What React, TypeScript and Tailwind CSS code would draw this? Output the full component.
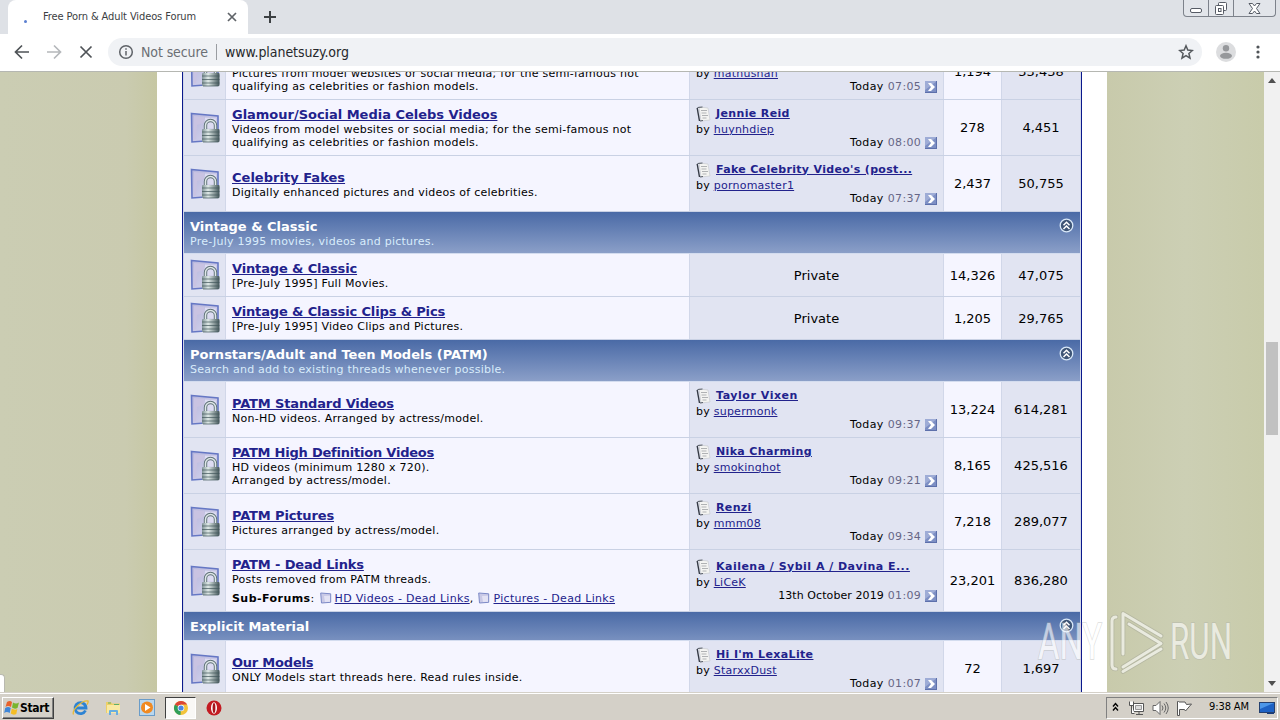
import type { ReactNode } from "react";

interface LastPost {
  title: string;
  author: string;
  day: string;
  time: string;
  titleClass?: string;
}

interface Forum {
  name: string;
  nameClass?: string;
  description: string[];
  subForums?: string[];
  lastPost?: LastPost;
  threads: string;
  posts: string;
}

interface Category {
  name?: string;
  description?: string;
  forums: Forum[];
}

const categories: Category[] = [
  {
    forums: [
      {
        name: "Glamour/Social Media Celebs",
        description: [
          "Pictures from model websites or social media; for the semi-famous not",
          "qualifying as celebrities or fashion models.",
        ],
        lastPost: { title: "Glamour", author: "mathushan", day: "Today", time: "07:05" },
        threads: "1,194",
        posts: "33,438",
      },
      {
        name: "Glamour/Social Media Celebs Videos",
        nameClass: "tracking-[-0.02px]",
        description: [
          "Videos from model websites or social media; for the semi-famous not",
          "qualifying as celebrities or fashion models.",
        ],
        lastPost: { title: "Jennie Reid", author: "huynhdiep", day: "Today", time: "08:00" },
        threads: "278",
        posts: "4,451",
      },
      {
        name: "Celebrity Fakes",
        nameClass: "tracking-[0.02px]",
        description: ["Digitally enhanced pictures and videos of celebrities."],
        lastPost: {
          title: "Fake Celebrity Video's (post...",
          titleClass: "tracking-[0.32px]",
          author: "pornomaster1",
          day: "Today",
          time: "07:37",
        },
        threads: "2,437",
        posts: "50,755",
      },
    ],
  },
  {
    name: "Vintage & Classic",
    description: "Pre-July 1995 movies, videos and pictures.",
    forums: [
      {
        name: "Vintage & Classic",
        description: ["[Pre-July 1995] Full Movies."],
        threads: "14,326",
        posts: "47,075",
      },
      {
        name: "Vintage & Classic Clips & Pics",
        description: ["[Pre-July 1995] Video Clips and Pictures."],
        threads: "1,205",
        posts: "29,765",
      },
    ],
  },
  {
    name: "Pornstars/Adult and Teen Models (PATM)",
    description: "Search and add to existing threads whenever possible.",
    forums: [
      {
        name: "PATM Standard Videos",
        description: ["Non-HD videos. Arranged by actress/model."],
        lastPost: {
          title: "Taylor Vixen",
          titleClass: "tracking-[0.55px]",
          author: "supermonk",
          day: "Today",
          time: "09:37",
        },
        threads: "13,224",
        posts: "614,281",
      },
      {
        name: "PATM High Definition Videos",
        nameClass: "tracking-[-0.22px]",
        description: ["HD videos (minimum 1280 x 720).", "Arranged by actress/model."],
        lastPost: { title: "Nika Charming", author: "smokinghot", day: "Today", time: "09:21" },
        threads: "8,165",
        posts: "425,516",
      },
      {
        name: "PATM Pictures",
        description: ["Pictures arranged by actress/model."],
        lastPost: { title: "Renzi", author: "mmm08", day: "Today", time: "09:34" },
        threads: "7,218",
        posts: "289,077",
      },
      {
        name: "PATM - Dead Links",
        description: ["Posts removed from PATM threads."],
        subForums: ["HD Videos - Dead Links", "Pictures - Dead Links"],
        lastPost: {
          title: "Kailena / Sybil A / Davina E...",
          titleClass: "tracking-[0.48px]",
          author: "LiCeK",
          day: "13th October 2019",
          time: "01:09",
        },
        threads: "23,201",
        posts: "836,280",
      },
    ],
  },
  {
    name: "Explicit Material",
    forums: [
      {
        name: "Our Models",
        nameClass: "tracking-[-0.22px]",
        description: ["ONLY Models start threads here. Read rules inside."],
        lastPost: { title: "Hi I'm LexaLite", author: "StarxxDust", day: "Today", time: "01:07" },
        threads: "72",
        posts: "1,697",
      },
    ],
  },
];

function LockedForumIcon() {
  return (
    <svg width="30" height="32" viewBox="0 0 30 32">
      <defs>
        <linearGradient id="lock" x1="0" x2="1">
          <stop offset="0" stopColor="#7f9296" />
          <stop offset="0.35" stopColor="#dfe9e7" />
          <stop offset="1" stopColor="#425559" />
        </linearGradient>
        <linearGradient id="page" x1="0" x2="1" y2="1">
          <stop offset="0" stopColor="#b5b5dc" />
          <stop offset="1" stopColor="#d9d8ef" />
        </linearGradient>
      </defs>
      <path d="M1.500 1.500 28 4v24L2 30z" fill="url(#page)" stroke="#6577c4" strokeWidth="1.600" />
      <path d="M4 4l10 1v6l-7 2-1 14-2 .5z" fill="#c9c3e2" />
      <path d="M15 5.500l11 1v10H14z" fill="#dddcf2" />
      <path d="M15.500 18v-4.500a5 5 0 0 1 10 0V18" fill="none" stroke="#5f7277" strokeWidth="3.400" />
      <path d="M15.500 18v-4.500a5 5 0 0 1 10 0V18" fill="none" stroke="#dfe7e8" strokeWidth="1.500" />
      <rect x="12" y="17" width="17.500" height="13" rx="1" fill="url(#lock)" />
      <path d="M12 20h17.500M12 23.500h17.500M12 27h17.500M13 30h15.500" stroke="#40565a" strokeWidth="0.700" />
    </svg>
  );
}

function PostIcon() {
  return (
    <svg width="16" height="16" viewBox="0 0 16 16">
      <path d="M3 1l9 1 2 12-9 1z" fill="#f4f4f2" stroke="#c9cbd0" strokeWidth="0.700" />
      <path d="M1.200 2l2.300 13" stroke="#333842" strokeWidth="1.400" />
      <path d="M1.500 1.500l5-.5M4 15l3-.5" stroke="#555b66" />
      <path d="M5 4.500h6M5.500 7h5M6 9.500h6M6.500 12h4" stroke="#b0b2b4" />
    </svg>
  );
}

function GoIcon() {
  return (
    <svg width="12" height="12" viewBox="0 0 12 12">
      <rect width="12" height="12" fill="#7d8fc4" />
      <path d="M0 0h12L0 9z" fill="#9eacd6" />
      <path d="M0 11.500h12M11.500 0v12" stroke="#5d70ab" />
      <path d="M3 2h3l4 4-4 4H3l3-4z" fill="#fff" />
    </svg>
  );
}

function SubForumIcon() {
  return (
    <svg width="12" height="12" viewBox="0 0 12 12">
      <path d="M.7 1l10 .8v8.500l-9.200.7z" fill="#c9c9e6" stroke="#7c89c6" />
      <path d="M4 4l6-.3v6l-5 .3z" fill="#e3e2f4" />
    </svg>
  );
}

function CollapseIcon() {
  return (
    <svg width="15" height="15" viewBox="0 0 15 15">
      <circle cx="7.500" cy="7.500" r="6.300" fill="#3e5576" stroke="#d9e8f8" strokeWidth="1.300" />
      <path d="M4.500 7.200l3-3 3 3M4.500 11l3-3 3 3" fill="none" stroke="#fff" strokeWidth="1.500" />
    </svg>
  );
}

function Link({ children, className = "" }: { children: ReactNode; className?: string }) {
  return (
    <a className={`text-[#22228c] underline decoration-1 underline-offset-1 ${className}`}>{children}</a>
  );
}

function ForumRow({ forum }: { forum: Forum }) {
  const height = forum.subForums ? "h-[62px]" : forum.lastPost ? "h-14" : "h-[43px]";
  const singleLine = forum.lastPost && !forum.subForums && forum.description.length === 1;
  return (
    <div
      className={`grid shrink-0 grid-cols-[42px_464px_254px_58px_78px] border-b border-[#c9d1e4] whitespace-nowrap ${height}`}
    >
      <div className="flex items-center justify-center border-r border-[#d1d7e9] bg-[#e1e4f2]">
        <LockedForumIcon />
      </div>
      <div
        className={`flex flex-col justify-center border-r border-[#d1d7e9] bg-[#f5f5ff] pl-1.5 ${
          singleLine ? "pt-0.5" : ""
        }`}
      >
        <div className="h-4 text-[13px] leading-4 font-bold">
          <Link className={forum.nameClass ?? "tracking-[-0.14px]"}>{forum.name}</Link>
        </div>
        {forum.description.map((line) => (
          <div key={line} className="h-[13px] text-[11px] leading-[13px] tracking-[0.25px]">
            {line}
          </div>
        ))}
        {forum.subForums && (
          <div className="mt-1.5 flex h-[13px] items-center text-[11px] leading-[13px] tracking-[0.3px]">
            <b className="tracking-[0.45px]">Sub-Forums</b>:
            {forum.subForums.map((sub, i) => (
              <span key={sub} className="flex items-center">
                <span className="mr-[3px] ml-[5px]">
                  <SubForumIcon />
                </span>
                <Link>{sub}</Link>
                {i === 0 && ","}
              </span>
            ))}
          </div>
        )}
      </div>
      <div className="flex flex-col justify-center border-r border-[#d1d7e9] bg-[#e1e4f2] px-1.5 text-[11px] tracking-[0.24px]">
        {forum.lastPost ? (
          <>
            <div className="flex h-4 items-center">
              <PostIcon />
              <Link
                className={`ml-1 leading-4 font-bold ${forum.lastPost.titleClass ?? "tracking-[0.36px]"}`}
              >
                {forum.lastPost.title}
              </Link>
            </div>
            <div className="h-[14px] leading-[15px]">
              by <Link>{forum.lastPost.author}</Link>
            </div>
            <div className="flex h-[14px] items-start justify-end leading-[13px]">
              <span className={forum.subForums ? "tracking-[0.08px]" : "tracking-[0.4px]"}>
                {forum.lastPost.day}
              </span>
              <span className="ml-1 tracking-[0.3px] text-[#666686]">{forum.lastPost.time}</span>
              <span className="mt-px ml-1">
                <GoIcon />
              </span>
            </div>
          </>
        ) : (
          <div className="pt-px text-center text-[13px] tracking-normal">Private</div>
        )}
      </div>
      <div className="flex items-center justify-center border-r border-[#d1d7e9] bg-[#f5f5ff] pt-px text-[13px]">
        {forum.threads}
      </div>
      <div className="flex items-center justify-center bg-[#e1e4f2] pt-px text-[13px]">{forum.posts}</div>
    </div>
  );
}

function CategoryHeader({ name, description }: { name: string; description?: string }) {
  return (
    <div
      className={`flex shrink-0 justify-between border-b border-[#d3dcef] bg-linear-to-b from-[#4a6aa6] px-1.5 pt-1.5 text-white ${
        description ? "h-[42px] to-[#8b9fc8]" : "h-[29px] to-[#7890bf]"
      }`}
    >
      <div className="pt-px whitespace-nowrap">
        <div className="h-4 text-[13px] leading-4 font-bold">{name}</div>
        {description && (
          <div className="h-[13px] text-[11px] leading-[13px] tracking-[0.24px] text-[#d8ecfb]">
            {description}
          </div>
        )}
      </div>
      <CollapseIcon />
    </div>
  );
}

function BrowserChrome() {
  return (
    <header className="h-[72px] font-['DejaVu_Sans_Condensed','DejaVu_Sans',sans-serif]">
      <div className="flex h-[34px] justify-between bg-[#dee1e6]">
        <div className="flex">
          <div className="ml-2 flex w-60 items-center rounded-t-lg bg-white pr-2.5 pl-4 text-[11px] text-[#3c4043]">
            <span className="mt-2 h-[3px] w-[3px] rounded-full bg-[#5b7fd0]" />
            <span className="ml-4 grow pt-px tracking-[-0.1px] whitespace-nowrap">
              Free Porn &amp; Adult Videos Forum
            </span>
            <svg width="12" height="12" viewBox="0 0 12 12" stroke="#5f6368" strokeWidth="1.700">
              <path d="M2 2l8 8M10 2l-8 8" />
            </svg>
          </div>
          <svg className="mt-2.5 ml-[15px]" width="14" height="14" viewBox="0 0 14 14" stroke="#3c4043" strokeWidth="2">
            <path d="M7 1v12M1 7h12" />
          </svg>
        </div>
        <div className="mr-1 flex h-[17px] w-[93px] rounded-b-sm border border-t-0 border-[#7d828b] bg-[#e2e5ea]">
          <div className="flex w-[25px] items-end justify-center border-r border-[#7d828b] pb-[3px]">
            <div className="h-[5px] w-3 rounded-[2px] border border-[#565b65] bg-white" />
          </div>
          <div className="flex w-[25px] items-center justify-center border-r border-[#7d828b]">
            <svg width="14" height="13" viewBox="0 0 14 13" fill="#fff" stroke="#565b65">
              <rect x="4.500" y=".5" width="8" height="8" rx="1" />
              <rect x="1.500" y="3.500" width="8" height="9" rx="1" />
              <rect x="4.500" y="6.500" width="2.500" height="3" />
            </svg>
          </div>
          <div className="flex grow items-center justify-center">
            <svg width="13" height="11" viewBox="0 0 13 11" fill="#fff" stroke="#565b65">
              <path d="M1 .5h3.500l2 2.500 2-2.500H12L8.500 5.500 12 10.500H8.500L6.500 8l-2 2.500H1l3.500-5z" />
            </svg>
          </div>
        </div>
      </div>
      <div className="flex h-[38px] items-center border-b border-[#b5b7b2] bg-white pr-3.5 pb-px pl-3.5">
        <svg width="80" height="16" viewBox="0 0 80 16" fill="none" strokeWidth="1.700">
          <path d="M15 8H2M8 1.500L1.500 8 8 14.500" stroke="#4f5357" />
          <path d="M33 8h13M40 1.500L46.500 8 40 14.500" stroke="#b5b8bb" />
          <path d="M66.500 2.500l11 11M77.500 2.500l-11 11" stroke="#4f5357" />
        </svg>
        <div className="ml-3.5 flex h-7 w-[1094px] items-center rounded-full bg-[#f0f2f5] pr-2 pl-2.5 text-[14px]">
          <svg width="16" height="16" viewBox="0 0 16 16" fill="none" stroke="#5f6368" strokeWidth="1.500">
            <circle cx="8" cy="8" r="6.300" />
            <path d="M8 7v4.500M8 4.200v1.600" />
          </svg>
          <span className="ml-[7px] w-[67px] tracking-[-0.1px] whitespace-nowrap text-[#6b6f74]">Not secure</span>
          <span className="mx-2 h-4 w-px bg-[#9a9da1]" />
          <span className="grow tracking-[-0.05px] text-[#26282b]">www.planetsuzy.org</span>
          <svg width="16" height="16" viewBox="0 0 16 16" fill="none" stroke="#55595d" strokeWidth="1.500">
            <path d="M8 1.800l1.800 4.300 4.600.4-3.500 3 1.100 4.600-4-2.500-4 2.500 1.100-4.600-3.500-3 4.600-.4z" />
          </svg>
        </div>
        <svg className="ml-3.5" width="20" height="20" viewBox="0 0 20 20">
          <circle cx="10" cy="10" r="10" fill="#dcdddf" />
          <circle cx="10" cy="6.300" r="3.200" fill="#96989b" />
          <ellipse cx="10" cy="13.800" rx="6" ry="3" fill="#96989b" />
        </svg>
        <svg className="ml-5" width="4" height="16" viewBox="0 0 4 16" fill="#505458">
          <circle cx="2" cy="3" r="1.600" />
          <circle cx="2" cy="8" r="1.600" />
          <circle cx="2" cy="13" r="1.600" />
        </svg>
      </div>
    </header>
  );
}

function Watermark() {
  return (
    <svg
      className="absolute top-[605px] left-[1030px] font-['Roboto',sans-serif]"
      width="210"
      height="72"
      viewBox="0 0 210 72"
      opacity="0.6"
    >
      <g
        fill="#fff"
        stroke="#a9aca8"
        strokeOpacity=".7"
        strokeWidth="1.600"
        paintOrder="stroke"
        fontSize="50"
      >
        <text x="8" y="54" textLength="64" lengthAdjust="spacingAndGlyphs">
          ANY
        </text>
        <text x="140" y="54" textLength="62" lengthAdjust="spacingAndGlyphs">
          RUN
        </text>
      </g>
      <g fill="none" strokeLinecap="round" strokeLinejoin="round">
        <path
          d="M86 12q-4 0-4 4v44q0 4 4 4M93 49V8.500L131 31M99 19l32 19.500L93 62M93 66.500L131 44"
          stroke="#898c88"
          strokeOpacity=".5"
          strokeWidth="4.600"
        />
        <path
          d="M86 12q-4 0-4 4v44q0 4 4 4M93 49V8.500L131 31M99 19l32 19.500L93 62M93 66.500L131 44"
          stroke="#fff"
          strokeWidth="3"
        />
      </g>
    </svg>
  );
}

function Taskbar() {
  return (
    <footer className="flex h-7 items-center justify-between border-t border-[#d4d0c8] bg-[#d4d0c8] font-['DejaVu_Sans_Condensed','DejaVu_Sans',sans-serif] shadow-[inset_0_1px_0_#fff]">
      <div className="flex items-center pt-0.5">
        <div className="ml-0.5 flex h-[22px] w-[52px] items-center border border-t-white border-r-[#404040] border-b-[#404040] border-l-white pl-px text-[11px] font-bold shadow-[inset_-1px_-1px_0_#808080]">
          <svg width="16" height="16" viewBox="0 0 16 16">
            <path d="M3 2q3-2 5 0L7 7q-3-2-5.500 0z" fill="#e8622c" />
            <path d="M9 2.500q3 2 6 0L13.500 8q-3 1.500-5.500-.5z" fill="#79b52f" />
            <path d="M1.200 8q3-2 5.500 0l-1 5q-3-2-5.500 0z" fill="#3f86d8" />
            <path d="M7.800 8.500q3 2 5.500.5l-1 5q-3 1.500-5.500-.5z" fill="#f5bd24" />
          </svg>
          <span className="text-[12px] tracking-[-0.3px]">Start</span>
        </div>
        <svg className="ml-[18px]" width="17" height="17" viewBox="0 0 17 17" fill="none">
          <path d="M13.500 11.500A5.500 5.500 0 1 1 14 9H4" stroke="#2d83d3" strokeWidth="2.800" />
          <path d="M1.500 15.500Q0 12 6 6.500T16 2q.5 1.500-1 3.500" stroke="#e8ba36" strokeWidth="1.300" />
        </svg>
        <svg className="ml-4" width="17" height="17" viewBox="0 0 17 17">
          <path d="M1 3h5l1 1.500h8V14H1z" fill="#edcf67" />
          <path d="M2 6h13v8H2z" fill="#f9e9a2" />
          <path d="M4 16v-4q0-1 1-1h7q1 0 1 1v4h-2v-3H6v3z" fill="#67aee0" />
          <path d="M3 4h3M9 5.500h5" stroke="#5faf68" />
        </svg>
        <svg className="ml-[17px]" width="16" height="17" viewBox="0 0 16 17">
          <rect x=".5" y=".5" width="15" height="16" fill="#b9d7ee" stroke="#6a9cc9" />
          <circle cx="8" cy="8.500" r="6" fill="#f08a22" />
          <path d="M6 5l5.500 3.500L6 12z" fill="#fff" />
        </svg>
        <div className="ml-2.5 flex h-[22px] w-[31px] items-center justify-center border border-t-[#404040] border-r-white border-b-white border-l-[#404040] bg-[#f9f8f6]">
          <svg width="16" height="16" viewBox="0 0 16 16">
            <circle cx="8" cy="8" r="7" fill="#f2c33b" />
            <path d="M8 8L1.900 4.500A7 7 0 0 0 7.500 15z" fill="#2f9e58" />
            <path d="M1.900 4.500A7 7 0 0 1 14.100 4.500H8V8z" fill="#db4537" />
            <circle cx="8" cy="8" r="3.300" fill="#fff" />
            <circle cx="8" cy="8" r="2.600" fill="#4a86e4" />
          </svg>
        </div>
        <svg className="ml-2.5" width="16" height="16" viewBox="0 0 16 16">
          <circle cx="8" cy="8" r="7.500" fill="#c31b22" />
          <ellipse cx="8" cy="8" rx="3" ry="5.800" fill="#fff" />
          <ellipse cx="8" cy="8" rx="1.400" ry="5" fill="#a6141b" />
        </svg>
      </div>
      <div className="mt-0.5 mr-0.5 flex h-[22px] w-[172px] items-center border border-t-[#808080] border-r-white border-b-white border-l-[#808080] text-[11px]">
        <svg className="ml-[5px]" width="8" height="12" viewBox="0 0 8 12" fill="none" stroke="#000" strokeWidth="1.400">
          <path d="M1 4.500l2.500-3 2.500 3M1 8.500l2.500-3 2.500 3" />
        </svg>
        <svg className="ml-2" width="17" height="16" viewBox="0 0 17 16" fill="#fff" stroke="#555">
          <path d="M5.500 3.500h10v8h-10zM8 14.500h7M11 12v2" />
          <path d="M1.500 1.500v4h4v-4M3.500 5.500v8h3" />
          <path d="M7.500 5.500h6v4h-6z" fill="#ddd" stroke="#999" />
        </svg>
        <svg className="ml-[7px]" width="17" height="16" viewBox="0 0 17 16" fill="#fff" stroke="#666">
          <path d="M1 5.500h3L8 1.500v13L4 10.500H1z" />
          <path d="M10 5.500q2 2.500 0 5M12 3.500q3.500 4.500 0 9M14 2q4.500 6 0 12" fill="none" />
        </svg>
        <svg className="ml-[7px]" width="17" height="16" viewBox="0 0 17 16" fill="#fff" stroke="#555">
          <path d="M2.500 1.500h-1v14h2v-6h5l1 1.500 6-7-5 .5-1.500-2.500H3z" />
        </svg>
        <span className="ml-4 tracking-[-0.1px] whitespace-nowrap">9:38 AM</span>
        <svg className="ml-2.5" width="17" height="14" viewBox="0 0 17 14">
          <rect x=".5" y="1.500" width="15" height="10" fill="#1e62c4" stroke="#25406f" />
          <path d="M1 2h14L1 8z" fill="#4d97e8" />
          <path d="M8 12.500h7" stroke="#173a78" />
        </svg>
      </div>
    </footer>
  );
}

export default function App() {
  return (
    <div className="relative flex h-[720px] w-[1280px] flex-col overflow-hidden bg-white font-['DejaVu_Sans',Verdana,sans-serif] text-black">
      <BrowserChrome />
      <div className="flex h-[620px]">
        <div className="flex w-[157px] items-end bg-linear-to-r from-[#cbcdb3] via-[#cacbb0] via-80% to-[#c6c7a3]">
          <div className="h-[18px] w-[5px] rounded-tr-sm border-t border-r border-[#b9b9b0] bg-white" />
        </div>
        <main className="flex h-[620px] w-[950px] justify-center overflow-hidden bg-white">
          <div className="w-[900px] border-x border-[#0b198c] bg-[#d1d7e9] px-px">
            <div className="-mt-7 flex flex-col">
              {categories.map((category, i) => (
                <section key={i} className="flex flex-col">
                  {category.name && (
                    <CategoryHeader name={category.name} description={category.description} />
                  )}
                  {category.forums.map((forum) => (
                    <ForumRow key={forum.name} forum={forum} />
                  ))}
                </section>
              ))}
            </div>
          </div>
        </main>
        <div className="w-[157px] bg-linear-to-r from-[#c8caab] via-[#cccfb4] to-[#c8cbaa]" />
        <div className="flex w-4 flex-col items-center bg-[#f1f1f1] py-1.5">
          <svg width="8" height="5" viewBox="0 0 8 5" fill="#505050">
            <path d="M0 5l4-5 4 5z" />
          </svg>
          <div className="mt-[259px] h-[93px] w-3 bg-[#c1c1c1]" />
          <svg className="mt-auto" width="8" height="5" viewBox="0 0 8 5" fill="#505050">
            <path d="M0 0l4 5 4-5z" />
          </svg>
        </div>
      </div>
      <Taskbar />
      <Watermark />
    </div>
  );
}
